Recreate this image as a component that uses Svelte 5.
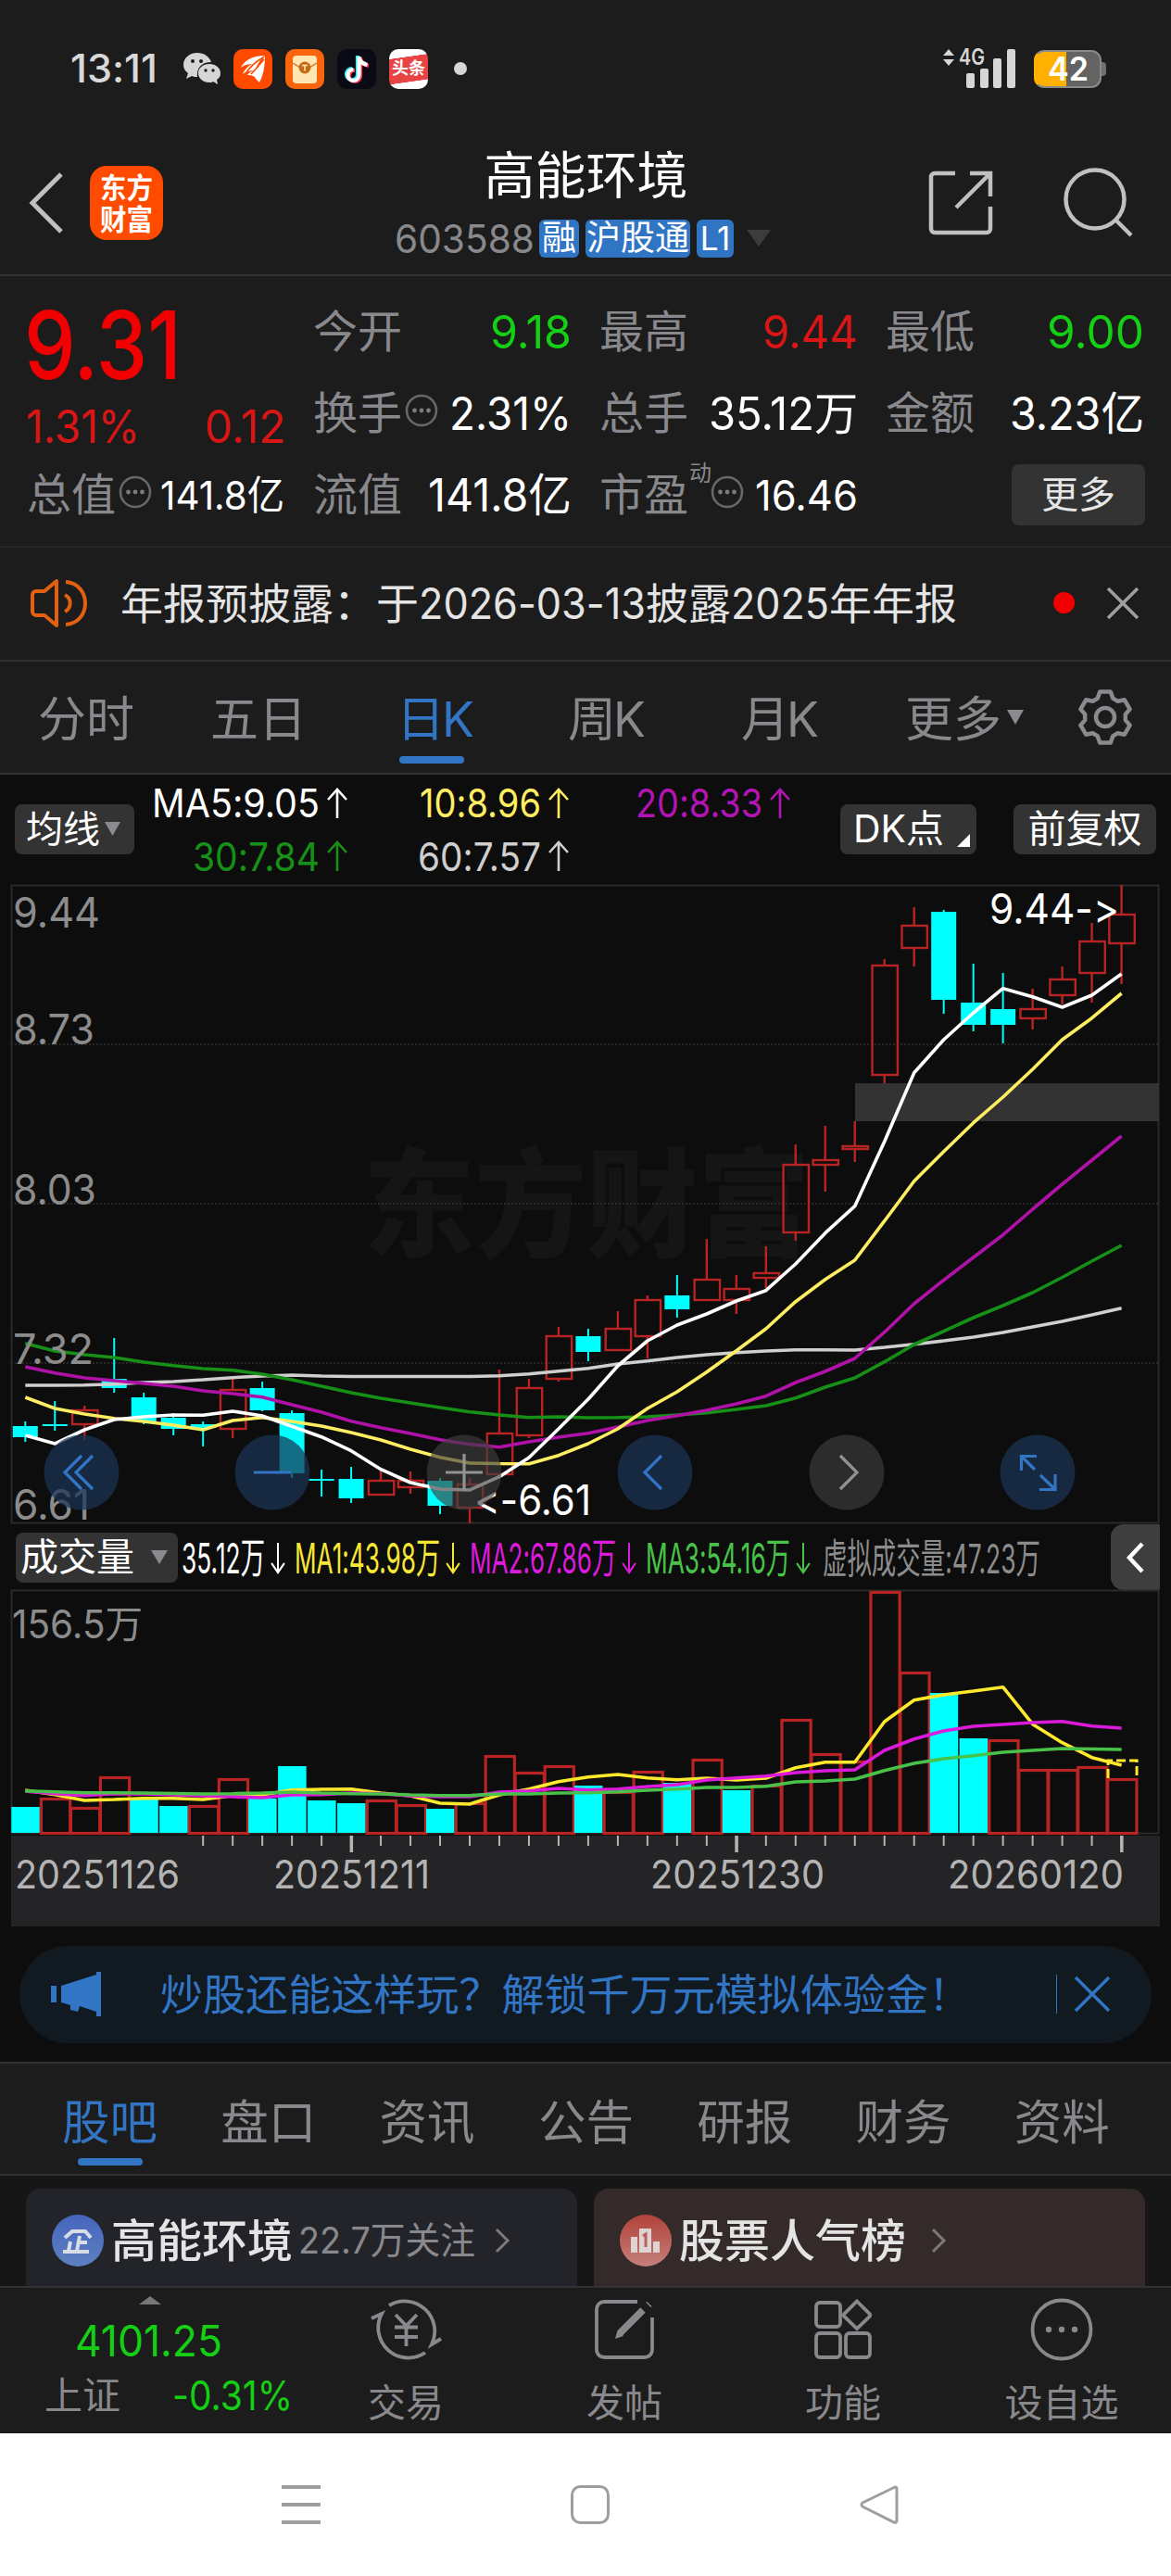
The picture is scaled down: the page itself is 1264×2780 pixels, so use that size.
<script>
  const X0 = 15.3;
  const STEP = 31.98;
  const cx = (i) => X0 + i * STEP;

  // [direction, body top, body bottom, wick top, wick bottom]
  const candles = [
    ['d', 1539, 1551, 1534, 1556], ['d', 1537, 1539, 1512, 1544], ['u', 1521, 1538, 1517, 1554],
    ['d', 1488, 1498, 1444, 1503], ['d', 1508, 1534, 1503, 1537], ['d', 1530, 1542, 1525, 1549],
    ['d', 1537, 1541, 1534, 1561], ['u', 1499, 1543, 1487, 1552], ['d', 1498, 1522, 1491, 1523],
    ['d', 1525, 1590, 1522, 1595], ['d', 1596, 1598, 1586, 1615], ['d', 1596, 1617, 1583, 1622],
    ['u', 1597, 1614, 1586, 1614], ['u', 1597, 1606, 1588, 1612], ['d', 1598, 1625, 1595, 1634],
    ['u', 1601, 1628, 1595, 1644], ['u', 1546, 1592, 1478, 1592], ['u', 1497, 1550, 1488, 1552],
    ['u', 1441, 1489, 1432, 1491], ['d', 1442, 1459, 1434, 1469], ['u', 1433, 1458, 1415, 1458],
    ['u', 1402, 1443, 1398, 1466], ['d', 1398, 1413, 1376, 1422], ['u', 1380, 1404, 1337, 1404],
    ['u', 1390, 1404, 1376, 1418], ['u', 1373, 1380, 1345, 1390], ['u', 1256, 1331, 1235, 1339],
    ['u', 1251, 1258, 1215, 1286], ['u', 1236, 1241, 1210, 1254], ['u', 1041, 1161, 1035, 1169],
    ['u', 998, 1024, 979, 1043], ['d', 984, 1079, 982, 1094], ['d', 1082, 1106, 1040, 1113],
    ['d', 1089, 1106, 1050, 1126], ['u', 1088, 1100, 1067, 1111], ['u', 1056, 1075, 1043, 1084],
    ['u', 1015, 1051, 996, 1082], ['u', 986, 1019, 955, 1062]
  ];

  const priceLines = [
    ['ma60', [1495, 1495, 1494.7, 1493.7, 1492, 1491, 1489, 1486.7, 1485, 1484, 1485, 1485.5, 1485.5, 1485.5, 1485.5, 1485.5, 1484.7, 1482.7, 1479.7, 1476.7, 1472, 1468.7, 1465, 1462, 1459.7, 1458, 1456.7, 1456.7, 1457, 1454, 1450.7, 1447, 1443, 1438, 1432, 1426, 1419, 1411.7]],
    ['ma30', [1449.7, 1458, 1462, 1465, 1470, 1473.7, 1477, 1478.7, 1483, 1489, 1496, 1503, 1509, 1514, 1519, 1523.7, 1527, 1529.7, 1529, 1530, 1529.7, 1529, 1527, 1524.7, 1521, 1517, 1508.7, 1497, 1487, 1469.7, 1451, 1436.7, 1422, 1409, 1395, 1378.5, 1361, 1344]],
    ['ma20', [1475, 1481.7, 1487, 1490, 1493, 1496, 1501, 1504, 1507.7, 1516, 1524, 1533.7, 1540.7, 1547, 1553.7, 1558.7, 1561.7, 1556, 1551, 1546.7, 1540, 1533, 1527.7, 1522, 1515, 1506.7, 1492, 1480, 1466, 1437.7, 1407, 1381.5, 1357, 1332.7, 1305, 1278, 1252, 1226]],
    ['ma10', [1508, 1520, 1526, 1530.7, 1534, 1538, 1543, 1533, 1529.7, 1534, 1539, 1546, 1554, 1564, 1572.7, 1579, 1579.5, 1579.7, 1570.7, 1558, 1542, 1520, 1502, 1480.7, 1457.7, 1434, 1404.7, 1380.7, 1360, 1317.7, 1274.7, 1242.7, 1211.7, 1184, 1154, 1122, 1098.7, 1072]],
    ['ma5', [1549, 1558, 1543, 1532, 1529, 1527, 1527.3, 1523, 1528, 1539.3, 1550.7, 1565.7, 1585.7, 1600, 1607, 1608, 1593.7, 1573, 1542, 1510, 1474, 1447, 1430, 1418, 1404, 1392.7, 1364, 1330.7, 1301.7, 1232, 1157.7, 1122, 1093, 1066.7, 1075.7, 1087, 1074, 1051]]
  ];

  const volumes = [1950, 1940, 1950, 1917, 1942, 1949, 1948, 1919, 1941, 1906, 1943, 1946, 1942, 1947, 1952, 1945, 1894, 1912, 1905, 1927, 1933, 1911, 1924, 1898, 1932, 1926, 1855, 1892, 1900, 1717, 1804, 1827, 1876, 1877, 1909, 1909, 1906, 1919];
  const falling = [0, 4, 5, 8, 9, 10, 11, 14, 19, 22, 24, 31, 32];

  const volLines = [
    ['v1', [1932, 1936.7, 1943, 1942, 1940.7, 1940.7, 1942, 1937.7, 1937, 1931.7, 1931, 1930.7, 1935, 1938, 1946, 1947, 1937, 1930.7, 1922.7, 1917.7, 1915, 1918.7, 1920.7, 1919, 1921, 1919, 1907.7, 1901.7, 1901.7, 1858, 1834.7, 1829, 1825, 1820.7, 1860.7, 1880.7, 1896.7, 1905]],
    ['v2', [1933, 1935.7, 1937.7, 1935.7, 1936, 1937, 1938, 1939, 1940, 1937, 1936.7, 1935, 1935.7, 1938, 1939, 1939, 1934, 1932.7, 1930, 1931.7, 1930.7, 1928, 1926, 1921, 1918.7, 1916.7, 1913, 1911, 1910, 1889, 1876.7, 1868, 1863, 1861, 1859, 1857.7, 1862.7, 1865]],
    ['v3', [1932.7, 1933.7, 1934.7, 1934.7, 1935, 1935.5, 1936, 1935.7, 1935, 1934, 1935, 1935.7, 1936, 1937, 1937.7, 1937.7, 1936, 1936, 1935, 1934.7, 1933.7, 1932, 1930.7, 1929, 1929, 1927.7, 1923, 1922, 1920, 1910.7, 1903, 1898, 1894.7, 1891, 1889, 1887, 1887.5, 1888]]
  ];

  const points = (ys, top) => ys.map((y, i) => `${cx(i).toFixed(1)},${(y - top).toFixed(1)}`).join(' ');

  const ticks = Array.from({ length: 32 }, (_, k) => k + 6);

  // Six-toothed settings wheel
  const gear = Array.from({ length: 6 }, (_, k) => {
    const at = (deg, r) => {
      const a = ((k * 60 - 90 + deg) * Math.PI) / 180;
      return `${(30 + r * Math.cos(a)).toFixed(1)},${(30 + r * Math.sin(a)).toFixed(1)}`;
    };
    return [at(-22, 22), at(-12, 28), at(12, 28), at(22, 22)].join(' ');
  }).join(' ');

  // Squeezes a label horizontally so that it takes exactly the given width
  function fit(node, width) {
    const natural = node.getBoundingClientRect().width;
    node.style.transform = `scaleX(${width / natural})`;
    node.style.marginRight = `${width - natural}px`;
  }

  const quotes = [
    [
      { k: '今开', v: '9.18', w: 88, c: 'down' },
      { k: '换手', v: '2.31%', w: 132, dots: true },
      { k: '流值', v: '141.8亿', w: 155 }
    ],
    [
      { k: '最高', v: '9.44', w: 103, c: 'up' },
      { k: '总手', v: '35.12万', w: 161 },
      { k: '市盈', v: '16.46', w: 111, dots: true, sup: '动', small: true }
    ],
    [
      { k: '最低', v: '9.00', w: 105, c: 'down' },
      { k: '金额', v: '3.23亿', w: 145 }
    ]
  ];

  const noticeParts = [
    ['年报预披露：于', 322], ['2026-03-13', 245], ['披露', 92], ['2025', 106], ['年年报', 138]
  ];
  const volLegend = [
    ['35.12万', 90, 'cw'], ['MA1:43.98万', 157, 'cy'], ['MA2:67.86万', 158, 'cm'], ['MA3:54.16万', 156, 'cg']
  ];
  const infoTabs = ['股吧', '盘口', '资讯', '公告', '研报', '财务', '资料'];
</script>

{#snippet arrow(dir)}
  <svg class="arrow" width="26" height="34" viewBox="0 0 26 34" preserveAspectRatio="none">
    {#if dir === 'up'}
      <path d="M13 33V3M3 13L13 2l10 11" />
    {:else}
      <path d="M13 0v31M4 22l9 10 9-10" />
    {/if}
  </svg>
{/snippet}

{#snippet dots()}
  <svg class="dots" width="36" height="36" viewBox="0 0 36 36">
    <circle cx="18" cy="18" r="16" fill="none" stroke="#68686b" stroke-width="2.6" />
    <g fill="#7c7c80"><circle cx="10.5" cy="18" r="2.4" /><circle cx="18" cy="18" r="2.4" /><circle cx="25.5" cy="18" r="2.4" /></g>
  </svg>
{/snippet}

<div class="screen">
  <div class="status">
    <span class="time" use:fit={94}>13:11</span>
    <svg class="wechat" width="42" height="36" viewBox="0 0 42 36">
      <path fill="#d6d6d6" d="M16 1C7 1 1 7 1 14c0 4 2 7 5 9l-2 6 6-3c2 1 4 1 6 1C15 17 21 11 31 11 29 5 23 1 16 1z" />
      <path fill="#d6d6d6" d="M29 13c-7 0-12 4.500-12 10s5 10 12 10c2 0 3 0 4-1l5 3-1-5c3-2 4-4 4-7 0-5.500-5-10-12-10z" />
      <g fill="#1c1c1c"><circle cx="11" cy="10" r="2" /><circle cx="20" cy="10" r="2" /><circle cx="25" cy="20" r="1.7" /><circle cx="33" cy="20" r="1.7" /></g>
    </svg>
    <svg class="app" width="42" height="43" viewBox="0 0 42 43">
      <rect width="42" height="43" rx="10" fill="#ff4a00" />
      <path fill="#fff" d="M33 7c-9 0-20 3-25 13 4-3 8-4 12-4-5 3-8 6-10 11 4-3 8-4 12-4-3 1-6 3-7 5 5 0 8 1 9 4l4 4C32 28 34 20 34 7c-3 6-6 10-10 14 2-5 5-9 9-14z" />
      <path fill="none" stroke="#ff4a00" stroke-width="1.6" d="M32 9C25 13 19 18 14 25M33 11c-5 6-9 11-14 16" />
    </svg>
    <svg class="app" width="42" height="43" viewBox="0 0 42 43">
      <rect width="42" height="43" rx="10" fill="#f8650d" />
      <rect x="8" y="7" width="26" height="30" rx="4" fill="#ffe6b3" />
      <path d="M8 15l13 8 13-8" fill="none" stroke="#d98a3a" stroke-width="1.5" />
      <circle cx="21" cy="20" r="6.5" fill="#c66b14" />
      <path d="M18 17.500h6M21 17.500v6" stroke="#ffe6b3" stroke-width="1.6" />
    </svg>
    <svg class="app" width="42" height="43" viewBox="0 0 42 43">
      <rect width="42" height="43" rx="10" fill="#090a14" />
      <g fill="none" stroke-width="4.2">
        <path stroke="#25f4ee" d="M22 7v20a6 6 0 1 1-6-6M22 8c1 5 4 7 9 8" />
        <path stroke="#fe2c55" d="M25 9v20a6 6 0 1 1-6-6M25 10c1 5 4 7 9 8" />
        <path stroke="#fff" d="M23.500 8v20a6 6 0 1 1-6-6M23.500 9c1 5 4 7 9 8" />
      </g>
    </svg>
    <div class="toutiao"><b>头条</b></div>
    <i class="more-dot"></i>
    <div class="net">
      <svg width="14" height="18" viewBox="0 0 14 18"><path d="M7 0l6 7H1zM7 18l6-7H1z" fill="#d6d6d6" /></svg>
      <span use:fit={28}>4G</span>
    </div>
    <svg class="signal" width="54" height="44" viewBox="0 0 54 44">
      <g fill="#d6d6d6">
        <rect x="0" y="27" width="9" height="16" rx="2" /><rect x="15" y="22" width="9" height="21" rx="2" />
        <rect x="29" y="11" width="9" height="32" rx="2" /><rect x="44" y="1" width="9" height="42" rx="2" />
      </g>
    </svg>
    <div class="battery"><span use:fit={44}>42</span></div>
  </div>

  <header>
    <svg class="back" width="38" height="66" viewBox="0 0 38 66"><path d="M35 2L4 33l31 31" /></svg>
    <div class="logo"><span use:fit={57}>东方</span><span use:fit={57}>财富</span></div>
    <div class="title">
      <h1>高能环境</h1>
      <div class="codes">
        <span class="code" use:fit={151}>603588</span>
        <span class="tag t1">融</span><span class="tag t2">沪股通</span><span class="tag t3">L1</span>
        <svg width="26" height="18" viewBox="0 0 26 18"><path d="M0 0h26L13 18z" fill="#3c3c3c" /></svg>
      </div>
    </div>
    <svg class="share" width="68" height="68" viewBox="0 0 68 68"><path d="M28 2H6a4 4 0 0 0-4 4v56a4 4 0 0 0 4 4h56a4 4 0 0 0 4-4V38M44 2h22v25M66 2L29 39" /></svg>
    <svg class="search" width="76" height="76" viewBox="0 0 76 76"><circle cx="34" cy="34" r="31.5" /><path d="M56 56l17 17" /></svg>
  </header>

  <section class="quote">
    <div class="main">
      <div class="big up"><span use:fit={170}>9.31</span></div>
      <div class="chg up"><span use:fit={123}>1.31%</span><span use:fit={88}>0.12</span></div>
      <div class="cell">
        <span class="k">总值</span>{@render dots()}
        <span class="v sm" use:fit={134}>141.8亿</span>
      </div>
    </div>
    {#each quotes as col}
      <div class="col">
        {#each col as q}
          <div class="cell">
            <span class="k">{q.k}</span>
            {#if q.sup}<sup>{q.sup}</sup>{/if}
            {#if q.dots}{@render dots()}{/if}
            <span class="v {q.c ?? ''}" class:md={q.small} use:fit={q.w}>{q.v}</span>
          </div>
        {/each}
        {#if col.length === 2}<div class="cell"><button class="more">更多</button></div>{/if}
      </div>
    {/each}
  </section>

  <section class="notice">
    <svg width="62" height="54" viewBox="0 0 62 54">
      <path d="M28 3v48L15 40H6a4 4 0 0 1-4-4V18a4 4 0 0 1 4-4h9zM37 18a10 10 0 0 1 0 18M38 4c28 2 28 44 0 46" />
    </svg>
    <p>{#each noticeParts as [text, w]}<span use:fit={w}>{text}</span>{/each}</p>
    <i></i>
    <svg class="x" width="36" height="36" viewBox="0 0 36 36"><path d="M2 2l32 32M34 2L2 34" /></svg>
  </section>

  <nav class="periods">
    <span>分时</span><span>五日</span><span class="on">日K</span><span>周K</span><span>月K</span>
    <span>更多</span>
    <svg class="tri" width="18" height="16" viewBox="0 0 18 16"><path d="M0 0h18L9 16z" fill="#8b8b8f" /></svg>
    <svg class="gear" width="60" height="60" viewBox="0 0 60 60"><polygon points={gear} /><circle cx="30" cy="30" r="10" /></svg>
  </nav>

  <section class="ma">
    <button class="pill avg">均线<svg width="17" height="15" viewBox="0 0 17 15"><path d="M0 0h17L8.500 15z" fill="#8b8b8f" /></svg></button>
    <div class="legend">
      <div class="cw"><span use:fit={181}>MA5:9.05</span>{@render arrow('up')}</div>
      <div class="cy2"><span use:fit={131}>10:8.96</span>{@render arrow('up')}</div>
      <div class="cp"><span use:fit={137}>20:8.33</span>{@render arrow('up')}</div>
      <div class="cgr"><span use:fit={137}>30:7.84</span>{@render arrow('up')}</div>
      <div class="cl"><span use:fit={133}>60:7.57</span>{@render arrow('up')}</div>
    </div>
    <button class="pill dk"><span use:fit={98}>DK点</span><svg width="14" height="14" viewBox="0 0 14 14"><path d="M14 0v14H0z" fill="#fff" /></svg></button>
    <button class="pill fq">前复权</button>
  </section>

  <section class="chart">
    <svg class="price" width="1240" height="690" viewBox="0 0 1240 690">
      <text class="mark" x="380" y="392" textLength="482" lengthAdjust="spacingAndGlyphs">东方财富</text>
      <rect class="frame" x="0.5" y="0.5" width="1238" height="688" />
      <g class="grid"><path d="M0 172h1239M0 344h1239M0 516h1239" /></g>
      <rect x="911" y="214" width="328" height="41" fill="#333" />
      {#each candles as [d, a, b, h, l], i}
        {#if d === 'd'}
          <g class="down-c">
            <rect x={cx(i) - 13.5} y={a - 955} width="27" height={b - a} />
            <rect x={cx(i) - 1} y={h - 955} width="2" height={l - h} />
          </g>
        {:else}
          <g class="up-c">
            <rect x={cx(i) - 13.2} y={a - 954} width="27.4" height={b - a - 2} />
            <path d="M{cx(i)} {h - 955}V{a - 955}M{cx(i)} {b - 955}V{l - 955}" />
          </g>
        {/if}
      {/each}
      {#each priceLines as [name, ys]}
        <polyline class="line {name}" points={points(ys, 955)} />
      {/each}
      <g class="scale">
        <text x="2" y="46" textLength="94" lengthAdjust="spacingAndGlyphs">9.44</text>
        <text x="2" y="172" textLength="88" lengthAdjust="spacingAndGlyphs">8.73</text>
        <text x="2" y="345" textLength="90" lengthAdjust="spacingAndGlyphs">8.03</text>
        <text x="2" y="517" textLength="87" lengthAdjust="spacingAndGlyphs">7.32</text>
        <text x="2" y="685" textLength="83" lengthAdjust="spacingAndGlyphs">6.61</text>
      </g>
      <g class="peak">
        <text x="1056" y="42" textLength="140" lengthAdjust="spacingAndGlyphs">9.44-&gt;</text>
        <text x="500" y="680" textLength="126" lengthAdjust="spacingAndGlyphs">&lt;-6.61</text>
      </g>
    </svg>
    <div class="controls">
      <svg class="rb" viewBox="0 0 82 82"><circle cx="41" cy="41" r="40.5" /><path d="M41 23L23 41l18 18M53 23L35 41l18 18" /></svg>
      <svg class="rb" viewBox="0 0 82 82"><circle cx="41" cy="41" r="40.5" /><path d="M21 41h40" /></svg>
      <svg class="rb off" viewBox="0 0 82 82"><circle cx="41" cy="41" r="40.5" /><path d="M21 41h40M41 21v40" /></svg>
      <svg class="rb" viewBox="0 0 82 82"><circle cx="41" cy="41" r="40.5" /><path d="M48 23L30 41l18 18" /></svg>
      <svg class="rb off" viewBox="0 0 82 82"><circle cx="41" cy="41" r="40.5" /><path d="M34 23l18 18-18 18" /></svg>
      <svg class="rb" viewBox="0 0 82 82"><circle cx="41" cy="41" r="40.5" /><path d="M23.500 39V23.500H40M23.500 23.500L38 38M60 43v16.500H43M60 59.500L44 44" /></svg>
    </div>
  </section>

  <section class="vol-head">
    <button class="pill vol">成交量<svg width="18" height="15" viewBox="0 0 18 15"><path d="M0 0h18L9 15z" fill="#8b8b8f" /></svg></button>
    {#each volLegend as [text, w, c]}
      <div class="vl {c}"><span use:fit={w}>{text}</span>{@render arrow('down')}</div>
    {/each}
    <div class="vl virtual"><span use:fit={235}>虚拟成交量:47.23万</span></div>
    <div class="fold"><svg width="22" height="36" viewBox="0 0 22 36"><path d="M18 3L4 18l14 15" /></svg></div>
  </section>

  <section class="volume">
    <svg width="1240" height="264" viewBox="0 0 1240 264">
      <rect class="frame" x="0.5" y="0.5" width="1238" height="262" />
      {#each volumes as y, i}
        {#if falling.includes(i)}
          <rect x={cx(i) - 15} y={y - 1716} width="30.5" height={1978 - y} fill="#0ff" />
        {:else}
          <rect class="vu" x={cx(i) - 14.8} y={y - 1714.5} width="31.2" height={1977 - y} />
        {/if}
      {/each}
      <path class="forecast" d="M{cx(37) - 14.5} 203V184h31v20" />
      {#each volLines as [name, ys]}
        <polyline class="line {name}" points={points(ys, 1716)} />
      {/each}
      <text class="vmax" x="1" y="52" textLength="141" lengthAdjust="spacingAndGlyphs">156.5万</text>
    </svg>
    <svg class="axis" width="1240" height="98" viewBox="0 0 1240 98">
      {#each ticks as i}
        <rect x={cx(i) - (i % 13 === 11 ? 1.5 : 1)} y="0" width={i % 13 === 11 ? 3.5 : 2} height={i % 13 === 11 ? 18 : 11} />
      {/each}
      <text x="4" y="57" textLength="178" lengthAdjust="spacingAndGlyphs">20251126</text>
      <text x="283" y="57" textLength="169" lengthAdjust="spacingAndGlyphs">20251211</text>
      <text x="690" y="57" textLength="188" lengthAdjust="spacingAndGlyphs">20251230</text>
      <text x="1011" y="57" textLength="190" lengthAdjust="spacingAndGlyphs">20260120</text>
    </svg>
  </section>

  <section class="promo">
    <svg width="56" height="48" viewBox="0 0 56 48"><path fill="#3275c4" d="M0 15h6v18H0zM11 15L49 3V0h5v48h-5v-5l-18-6-2 6-8-2v-5l-10-3z" /></svg>
    <p use:fit={875}>炒股还能这样玩？解锁千万元模拟体验金！</p>
    <i></i>
    <svg class="x" width="40" height="40" viewBox="0 0 40 40"><path d="M2 2l36 36M38 2L2 38" /></svg>
  </section>

  <nav class="info">
    {#each infoTabs as t, i}
      <span class:on={i === 0}>{t}</span>
    {/each}
  </nav>

  <section class="cards">
    <div class="card blue">
      <svg width="56" height="56" viewBox="0 0 56 56">
        <defs><linearGradient id="gb" x1="0" y1="0" x2="0" y2="1"><stop offset="0" stop-color="#4565bd" /><stop offset="1" stop-color="#5d80c0" /></linearGradient></defs>
        <circle cx="28" cy="28" r="28" fill="url(#gb)" />
        <path class="glyph" d="M14 25l8-7h14l6 7M30 23l-3 16M29 30h9M20 29l-2 10M12 40h28" />
      </svg>
      <b>高能环境</b><span class="fans" use:fit={191}>22.7万关注</span>
      <svg class="go" width="18" height="28" viewBox="0 0 18 28"><path d="M3 2l12 12L3 26" /></svg>
    </div>
    <div class="card red">
      <svg width="56" height="56" viewBox="0 0 56 56">
        <defs><linearGradient id="gr" x1="0" y1="0" x2="0" y2="1"><stop offset="0" stop-color="#b1423a" /><stop offset="1" stop-color="#c57f7b" /></linearGradient></defs>
        <circle cx="28" cy="28" r="28" fill="url(#gr)" />
        <path fill="#dcd3d2" d="M12 24h7v17h-7zM21 15h13v26H21zM36 29h7v12h-7z" /><path d="M25 23l3-2v14" fill="none" stroke="#b9605a" stroke-width="3" />
      </svg>
      <b>股票人气榜</b>
      <svg class="go" width="18" height="28" viewBox="0 0 18 28"><path d="M3 2l12 12L3 26" /></svg>
    </div>
  </section>

  <footer>
    <div class="index">
      <svg width="24" height="9" viewBox="0 0 24 9"><path d="M12 0l12 9H0z" fill="#77777a" /></svg>
      <strong use:fit={159}>4101.25</strong>
      <div><span>上证</span><em use:fit={130}>-0.31%</em></div>
    </div>
    <div class="act">
      <svg width="78" height="70" viewBox="0 0 78 70"><path d="M21 9A32.500 32.500 0 0 1 67 51l10-6M60 60A32.500 32.500 0 0 1 13 18L2 23M28 19l11.500 12L51 19M27 32.500h25M27 43h25M39.500 31v22" /></svg>
      <span>交易</span>
    </div>
    <div class="act">
      <svg width="78" height="70" viewBox="0 0 78 70"><path d="M53 5H17a8 8 0 0 0-8 8v44a8 8 0 0 0 8 8h44a8 8 0 0 0 8-8V22" /><path class="pen" d="M34 39l25-25M65 8.500l1-1" /><path class="tip" d="M29 45l2.500-9 6.500 6z" /></svg>
      <span>发帖</span>
    </div>
    <div class="act">
      <svg width="78" height="70" viewBox="0 0 78 70"><rect x="10" y="6" width="26" height="26" rx="4" /><path d="M54 4.500L68 18.500a2 2 0 0 1 0 2L54 34 40 20.500a2 2 0 0 1 0-2z" /><rect x="10" y="39" width="26" height="26" rx="4" /><rect x="42" y="39" width="26" height="26" rx="4" /></svg>
      <span>功能</span>
    </div>
    <div class="act">
      <svg width="78" height="70" viewBox="0 0 78 70"><circle cx="39" cy="35" r="31.5" /><g class="fill"><circle cx="25" cy="35" r="3.2" /><circle cx="39" cy="35" r="3.2" /><circle cx="53" cy="35" r="3.2" /></g></svg>
      <span>设自选</span>
    </div>
  </footer>

  <div class="system">
    <svg width="42" height="42" viewBox="0 0 42 42"><path stroke-width="4" d="M0 2h42M0 21h42M0 40h42" /></svg>
    <svg width="42" height="42" viewBox="0 0 42 42"><rect x="1.5" y="1.5" width="39" height="39" rx="9" /></svg>
    <svg width="42" height="42" viewBox="0 0 42 42"><path d="M37 2.500L3 19a2.500 2.500 0 0 0 0 4l34 17q3 1 3-2V4q0-3-3-1.500z" /></svg>
  </div>
</div>

<style>
  :global(body) { background: #0d0d0d; }
  .screen {
    width: 1264px; height: 2780px; overflow: hidden; background: #0d0d0d; color: #fff;
    font-family: Inter, "Noto Sans CJK SC", sans-serif; line-height: 1; white-space: nowrap;
    font-feature-settings: "calt" 0;
  }
  .screen * { box-sizing: border-box; }
  svg { display: block; flex: none; overflow: visible; }
  span, p, em, strong, b { display: block; flex: none; margin: 0; transform-origin: 0 50%; font-style: normal; }
  button { border: 0; font: inherit; color: inherit; padding: 0; }
  p { width: max-content; }

  .status { height: 148px; display: flex; align-items: center; padding-left: 76px; background: #1c1c1c; }
  .time { font-size: 42px; font-weight: 500; color: #d8d8d8; }
  .wechat { margin-left: 27px; }
  .app { margin-left: 14px; }
  .wechat + .app { margin-left: 13px; }
  .toutiao { width: 42px; height: 43px; margin-left: 14px; border-radius: 10px; background: linear-gradient(172deg, #fff 22%, #e94444 23%, #e94444 78%, #fff 79%); display: flex; align-items: center; justify-content: center; }
  .toutiao b { font-size: 18px; }
  .more-dot { width: 14px; height: 14px; border-radius: 7px; background: #d6d6d6; margin-left: 28px; }
  .net { display: flex; align-items: center; gap: 4px; margin: -25px 0 0 513px; width: 26px; color: #d6d6d6; font-size: 24px; font-weight: 600; }
  .battery { width: 73px; height: 41px; margin-left: 19px; border-radius: 11px; background: linear-gradient(90deg, #ffb000 33px, #636363 33px); border: 2px solid #8a8a8a; border-left-color: #ffb000; display: flex; align-items: center; justify-content: center; position: relative; }
  .battery::after { content: ""; position: absolute; right: -7px; top: 11px; width: 5px; height: 15px; border-radius: 0 4px 4px 0; background: #707070; }
  .battery span { font-size: 35px; font-weight: 600; }

  header { height: 150px; background: #1c1c1c; border-bottom: 2px solid #323232; display: flex; align-items: center; padding: 0 0 6px 31px; }
  header svg { fill: none; stroke: #c0c0c0; stroke-width: 4.500; }
  .back { stroke-width: 5; }
  .logo { width: 79px; height: 80px; margin-left: 28px; padding-left: 11px; border-radius: 18px; background: #ff4b00; display: flex; flex-direction: column; align-items: flex-start; justify-content: center; gap: 3px; font-size: 31px; font-weight: 700; }
  .title { width: 405px; margin-left: 251px; display: flex; flex-direction: column; gap: 26px; }
  h1 { margin: 0; font-size: 55px; font-weight: 400; text-align: center; padding-left: 6px; }
  .codes { display: flex; align-items: center; height: 41px; margin-top: -6px; margin-bottom: -1px; }
  .code { font-size: 43px; color: #89898d; margin-left: -1px; }
  .tag { height: 41px; line-height: 40px; border-radius: 6px; background: #2f75c4; font-size: 37px; text-align: center; }
  .t1 { width: 43px; margin-left: 5px; }
  .t2 { width: 113px; margin-left: 7px; }
  .t3 { width: 40px; margin-left: 7px; font-size: 35px; }
  .codes svg { margin-left: 14px; stroke: none; }
  .share { margin-left: 171px; }
  .search { margin-left: 77px; }

  .quote { height: 293px; background: #1c1c1c; border-bottom: 2px solid #262626; padding: 16px 0 0 29px; display: grid; grid-template-columns: repeat(4, 278px); gap: 31px; }
  .up { color: #d81616; }
  .down { color: #14cf14; }
  .cell { height: 88px; display: flex; align-items: center; }
  .k { font-size: 48px; color: #89898d; }
  .v { font-size: 49px; margin-left: auto; }
  .col .cell { margin-right: -1px; }
  .v.md { font-size: 45px; }
  .v.sm { font-size: 43px; }
  .dots { margin: -7px 0 0 3px; }
  sup { font-size: 24px; color: #89898d; margin: -46px 0 0 1px; line-height: 1; }
  sup + .dots { margin-left: -1px; }
  .big { height: 116px; display: flex; align-items: center; font-size: 102px; font-weight: 500; color: #f00000; margin-left: -3px; }
  .chg { height: 60px; display: flex; align-items: center; justify-content: space-between; font-size: 49px; margin: 0 -2px 0 -1px; }
  .more { margin-left: auto; margin-right: -1px; width: 144px; height: 66px; border-radius: 8px; background: #333; font-size: 40px; color: #e6e6e6; }

  .notice { height: 123px; background: #1c1c1c; border-bottom: 2px solid #303030; display: flex; align-items: center; padding: 0 0 2px 33px; }
  .notice svg { fill: none; stroke: #e2600f; stroke-width: 4; stroke-linejoin: round; }
  .notice p { font-size: 46px; color: #e4e4e4; margin-left: 35px; display: flex; }
  .notice i { width: 23px; height: 23px; border-radius: 50%; background: #f00000; margin-left: 104px; }
  .notice .x { stroke: #a0a0a0; stroke-width: 3.500; margin-left: 34px; }

  .periods { height: 122px; background: #1c1c1c; border-bottom: 2px solid #323232; display: flex; align-items: center; padding-left: 41px; font-size: 52px; color: #89898d; }
  .periods span { height: 122px; line-height: 127px; }
  .periods span:nth-child(1) { width: 186px; }
  .periods span:nth-child(2) { width: 201px; }
  .periods span:nth-child(3) { width: 185px; letter-spacing: -3px; }
  .periods span:nth-child(4) { width: 187px; letter-spacing: -3px; }
  .periods span:nth-child(5) { width: 177px; letter-spacing: -3px; }
  .on { color: #3275c4; position: relative; }
  .on::after { content: ""; position: absolute; left: 3px; top: 103px; width: 70px; height: 8px; border-radius: 4px; background: #3275c4; }
  .tri { margin-left: 6px; }
  .gear { margin-left: 58px; fill: none; stroke: #8b8b8f; stroke-width: 4.500; stroke-linejoin: round; }

  .ma { height: 119px; display: flex; align-items: center; padding-left: 16px; }
  .pill { display: flex; align-items: center; height: 54px; margin-top: -2px; border-radius: 8px; background: #333; font-size: 41px; }
  .avg { width: 129px; padding-left: 12px; gap: 5px; margin-right: 18px; font-size: 40px; }
  .legend { width: 744px; height: 119px; padding-top: 2px; display: grid; grid-template-columns: 214px 239px 239px; grid-template-rows: 57px 58px; font-size: 43px; }
  .legend div { display: flex; align-items: center; justify-content: flex-end; gap: 6px; }
  .arrow { fill: none; stroke: currentColor; stroke-width: 2.600; }
  .dk { width: 147px; padding-left: 14px; }
  .dk svg { margin: 24px 0 0 14px; }
  .fq { width: 154px; margin-left: 40px; justify-content: center; }
  .cw { color: #fff; }
  .cy { color: #f8e733; }
  .cm { color: #dc1adc; }
  .cg { color: #48c248; }
  .cy2 { color: #ffee62; }
  .cp { color: #b414b4; }
  .cgr { color: #169016; }
  .cl { color: #cfcfcf; }

  .chart { position: relative; height: 690px; padding-left: 12px; }
  .frame { fill: none; stroke: #2a2a2a; stroke-width: 2; }
  .grid path { stroke: #303030; stroke-width: 1.500; stroke-dasharray: 2 2; }
  .mark { font-size: 128px; font-weight: 900; fill: #151515; }
  .down-c { fill: #0ff; }
  .up-c { fill: none; stroke: #b82424; stroke-width: 2.400; }
  .line { fill: none; stroke-width: 3.600; stroke-linejoin: bevel; }
  .ma5 { stroke: #fff; }
  .ma10 { stroke: #ffee62; }
  .ma20 { stroke: #b012a8; }
  .ma30 { stroke: #169016; }
  .ma60 { stroke: #cfcfcf; }
  .scale { font-size: 45px; fill: #8c8c8c; }
  .peak { font-size: 45px; fill: #fff; }
  .controls { position: absolute; left: 47px; top: 593px; display: flex; gap: 124.400px; }
  .rb { width: 82px; height: 82px; fill: none; stroke: #3275c4; stroke-width: 3.200; }
  .rb circle { fill: rgba(27, 53, 86, 0.720); stroke: none; }
  .off { stroke: #929292; }
  .off circle { fill: rgba(62, 62, 62, 0.640); }

  .vol-head { height: 71px; display: flex; align-items: center; padding: 2px 12px 0 17px; font-size: 45px; }
  .vol { width: 175px; padding-left: 5px; gap: 18px; margin-right: 4px; }
  .vl { display: flex; align-items: center; }
  .vl .arrow { margin: 0 8px 0 4px; width: 20px; }
  .virtual { color: #8c8c8c; font-size: 44px; margin-left: 3px; }
  .fold { width: 53px; height: 71px; margin: -2px 0 0 auto; border-radius: 14px 0 0 14px; background: #3e3e3e; display: flex; align-items: center; justify-content: center; }
  .fold path { fill: none; stroke: #fff; stroke-width: 4.500; }

  .volume { padding-left: 12px; }
  .vu { fill: none; stroke: #b82424; stroke-width: 3.200; }
  .forecast { fill: none; stroke: #ffe92c; stroke-width: 3; stroke-dasharray: 10 4; }
  .v1 { stroke: #ffe92c; }
  .v2 { stroke: #dc1adc; }
  .v3 { stroke: #48c248; }
  .vmax { font-size: 42px; fill: #8c8c8c; }
  .axis { margin-top: 1px; background: #242426; fill: #b4b4b4; font-size: 43px; }

  .promo { width: 1222px; height: 105px; margin: 21px 0 20px 21px; border-radius: 53px; background: #111921; display: flex; align-items: center; padding: 0 0 2px 34px; }
  .promo p { font-size: 46px; color: #3275c4; margin-left: 62px; }
  .promo i { width: 1px; height: 42px; background: #3275c4; margin-left: 92px; }
  .promo .x { fill: none; stroke: #3275c4; stroke-width: 3.500; margin-left: 18px; }

  .info { height: 123px; background: #1c1c1c; border-top: 2px solid #323232; border-bottom: 2px solid #323232; display: flex; padding-left: 67px; font-size: 51.500px; color: #89898d; }
  .info span { width: 171.300px; line-height: 126px; height: 119px; }
  .info .on::after { left: 17px; top: 102px; }

  .cards { height: 119px; padding: 14px 28px 0; display: flex; gap: 18px; background: #161616; }
  .card { width: 595px; border-radius: 16px 16px 0 0; display: flex; align-items: center; padding: 7px 0 0 28px; }
  .blue { background: #22242a; }
  .red { background: #342a29; }
  .card b { font-size: 49px; font-weight: 500; color: #e4e4e4; margin-left: 8px; }
  .fans { font-size: 40px; color: #89898d; margin-left: 6px; }
  .glyph { fill: none; stroke: #d8dce6; stroke-width: 4; }
  .go { margin-left: 20px; fill: none; stroke: #7a7a7d; stroke-width: 3; }
  .red .go { margin-left: 26px; }

  footer { height: 159px; background: #1c1c1c; border-top: 2px solid #323232; display: flex; }
  .index { width: 307px; padding: 9px 0 0 48px; margin-right: -2px; }
  .index > svg { margin-left: 102px; }
  .index strong { width: max-content; margin-top: 15px; margin-left: 33px; font-size: 47px; font-weight: 400; color: #14cf14; }
  .index div { display: flex; align-items: center; margin-top: 14px; width: 268px; justify-content: space-between; font-size: 41px; color: #89898d; }
  .index em { font-size: 44px; color: #14cf14; }
  .act { width: 236px; padding-top: 10px; display: flex; flex-direction: column; align-items: center; font-size: 41px; color: #89898d; }
  .act:nth-child(2) { margin-left: 15px; }
  .act span { margin-top: 24px; }
  .act svg { fill: none; stroke: #89898d; stroke-width: 3.800; }
  .act .pen { stroke-width: 7.500; }
  .act .tip { fill: #89898d; stroke: none; }
  .act .fill { fill: #89898d; stroke: none; }

  .system { height: 154px; background: #fff; display: flex; align-items: center; padding-left: 304px; gap: 270px; }
  .system svg { fill: none; stroke: #9e9e9e; stroke-width: 3; }
</style>
